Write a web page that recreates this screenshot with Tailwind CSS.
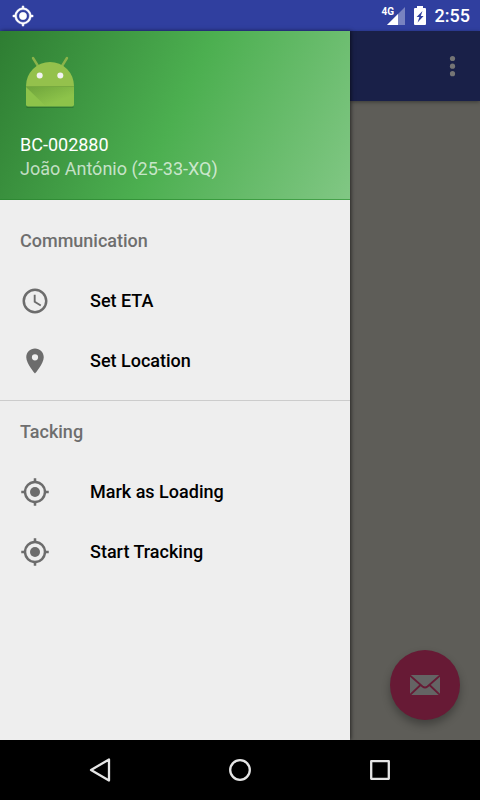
<!DOCTYPE html>
<html lang="en">
<head>
<meta charset="utf-8">
<meta name="viewport" content="width=device-width, initial-scale=1">
<title>Navigation drawer</title>
<script src="https://cdn.jsdelivr.net/npm/@tailwindcss/browser@4"></script>
</head>
<body class="flex min-h-screen flex-col bg-black font-['Roboto','Noto_Sans',sans-serif]">
<svg class="hidden" aria-hidden="true">
  <symbol id="gps" viewBox="0 0 24 24"><circle cx="12" cy="12" r="4"/><path d="M20.94 11A8.99 8.99 0 0 0 13 3.06V1h-2v2.06A8.99 8.99 0 0 0 3.06 11H1v2h2.06A8.99 8.99 0 0 0 11 20.94V23h2v-2.06A8.99 8.99 0 0 0 20.94 13H23v-2h-2.06zM12 19a7 7 0 1 1 0-14 7 7 0 0 1 0 14z"/></symbol>
</svg>

<header class="flex h-[31px] shrink-0 items-center justify-between bg-[#303f9f] pr-[10px] pl-3 text-white">
  <svg class="size-[22px] fill-white stroke-white" viewBox="0 0 24 24" stroke-width=".5" aria-label="Location active"><use href="#gps"/></svg>
  <div class="flex items-center">
    <div class="relative h-[18px] w-[23px]">
      <svg class="ml-[5px] h-[18px] w-[18px]" viewBox="0 0 18 18" aria-label="Signal"><path d="M18 0v18H0z" fill="#fff" fill-opacity=".35"/><path d="M11 7v11H0z" fill="#fff"/></svg>
      <span class="absolute top-0 left-0 text-[10px] leading-[10px] font-bold">4G</span>
    </div>
    <svg class="ml-[9px] h-[19px] w-3" viewBox="0 0 12 19" aria-label="Battery charging"><path d="M3 0h6v2h2a1 1 0 0 1 1 1v15a1 1 0 0 1-1 1H1a1 1 0 0 1-1-1V3a1 1 0 0 1 1-1h2z" fill="#fff"/><path d="M8.500 5 2.600 11h2.800L3.600 16.500l6-6.500H6.800z" fill="#303f9f"/></svg>
    <time class="ml-[9px] text-lg font-medium">2:55</time>
  </div>
</header>

<div class="flex flex-1 bg-[#5e5d58]">
  <aside class="z-10 flex w-[350px] shrink-0 flex-col bg-[#eeeeee] shadow-[1px_0_4px_rgba(0,0,0,0.6)]">
    <div class="flex h-[169px] flex-col border-b border-[#2f8f33]/60 bg-[linear-gradient(116deg,#2e7d32,#4caf50_50%,#81c784)] px-5 pt-5">
      <svg class="size-[60px]" viewBox="0 0 60 60" aria-label="Profile picture">
        <defs><linearGradient id="fold" x1="0" y1="0" x2="1" y2="1"><stop offset="0" stop-color="#558b2f" stop-opacity=".55"/><stop offset=".7" stop-color="#558b2f" stop-opacity="0"/></linearGradient></defs>
        <path d="M13 7l5 8M47 7l-5 8" stroke="#8bb34a" stroke-width="2.4" stroke-linecap="round"/>
        <path d="M6.500 56.200h47" stroke="#000" stroke-opacity=".25"/>
        <path d="M6 35a24 24 0 0 1 48 0z" fill="#94c14c"/>
        <path d="M6 35h48v18.500a2 2 0 0 1-2 2H8a2 2 0 0 1-2-2z" fill="#8dc34a"/>
        <path d="M6 36h48v17.500a2 2 0 0 1-2 2H26z" fill="url(#fold)"/>
        <path d="M6 35.500h48" stroke="#6f9f3a" stroke-opacity=".7"/>
        <circle cx="19.700" cy="24.500" r="3" fill="#f3f3f3"/><circle cx="40.300" cy="24.500" r="3" fill="#f3f3f3"/>
      </svg>
      <p class="mt-[22px] text-lg leading-6 text-white">BC-002880</p>
      <p class="text-lg leading-6 text-white/70">João António (25-33-XQ)</p>
    </div>
    <nav class="pt-[11px] text-lg font-medium text-black">
      <section class="border-b border-[#cccccc] pb-[9px]">
        <h2 class="flex h-[60px] items-center px-5 text-[#6e6e6e]">Communication</h2>
        <a href="#eta" class="flex h-[60px] items-center gap-10 px-5">
          <svg class="size-[30px] fill-[#6c6c6c]" viewBox="0 0 24 24"><path d="M11.99 2C6.47 2 2 6.48 2 12s4.47 10 9.99 10C17.52 22 22 17.52 22 12S17.52 2 11.99 2zM12 20a8 8 0 1 1 0-16 8 8 0 0 1 0 16zM12.5 7H11v6l5.25 3.15.75-1.23-4.5-2.67z"/></svg>
          Set ETA
        </a>
        <a href="#location" class="flex h-[60px] items-center gap-10 px-5">
          <svg class="size-[30px] fill-[#6c6c6c]" viewBox="0 0 24 24"><path d="M12 2C8.13 2 5 5.13 5 9c0 5.25 7 13 7 13s7-7.75 7-13c0-3.87-3.13-7-7-7zm0 9.5a2.500 2.500 0 1 1 0-5 2.500 2.500 0 0 1 0 5z"/></svg>
          Set Location
        </a>
      </section>
      <section class="pt-px">
        <h2 class="flex h-[60px] items-center px-5 text-[#6e6e6e]">Tacking</h2>
        <a href="#loading" class="flex h-[60px] items-center gap-10 px-5">
          <svg class="size-[30px] fill-[#6c6c6c]"><use href="#gps"/></svg>
          Mark as Loading
        </a>
        <a href="#tracking" class="flex h-[60px] items-center gap-10 px-5">
          <svg class="size-[30px] fill-[#6c6c6c]"><use href="#gps"/></svg>
          Start Tracking
        </a>
      </section>
    </nav>
  </aside>

  <main class="flex flex-1 flex-col justify-between">
    <div class="flex h-[70px] items-center justify-end bg-[#192048] pr-[13px] shadow-[0_1px_4px_rgba(0,0,0,0.4)]">
      <button class="size-[30px]" aria-label="More options"><svg class="size-[30px] fill-[#757575]" viewBox="0 0 30 30"><circle cx="15.500" cy="7.500" r="2.600"/><circle cx="15.500" cy="15.200" r="2.600"/><circle cx="15.500" cy="22.700" r="2.600"/></svg></button>
    </div>
    <div class="flex justify-end p-5">
      <button class="flex size-[70px] items-center justify-center rounded-full bg-[#671a35] shadow-[0_5px_8px_rgba(0,0,0,0.3)]" aria-label="Send mail">
        <svg class="h-5 w-[30px]" viewBox="0 0 30 20"><rect width="30" height="20" rx="1" fill="#646464"/><path d="M0 .5l12.500 11q2.500 2 5 0L30 .5M0 20l10.500-10M30 20l-10.500-10" fill="none" stroke="#671a35" stroke-width="1.800"/></svg>
      </button>
    </div>
  </main>
</div>

<footer class="flex h-[60px] shrink-0 items-center justify-center gap-[110px] bg-black">
  <button class="size-[30px]" aria-label="Back"><svg class="size-[30px]" viewBox="0 0 30 30" fill="none" stroke="#e6e6e6" stroke-width="2.300" stroke-linejoin="round"><path d="M24 4.500v21L6 15z"/></svg></button>
  <button class="size-[30px]" aria-label="Home"><svg class="size-[30px]" viewBox="0 0 30 30" fill="none" stroke="#e6e6e6" stroke-width="2.300"><circle cx="15" cy="15" r="9.800"/></svg></button>
  <button class="size-[30px]" aria-label="Recent apps"><svg class="size-[30px]" viewBox="0 0 30 30" fill="none" stroke="#e6e6e6" stroke-width="2.300" stroke-linejoin="round"><path d="M6.200 6.200h17.600v17.600H6.200z"/></svg></button>
</footer>
</body>
</html>
